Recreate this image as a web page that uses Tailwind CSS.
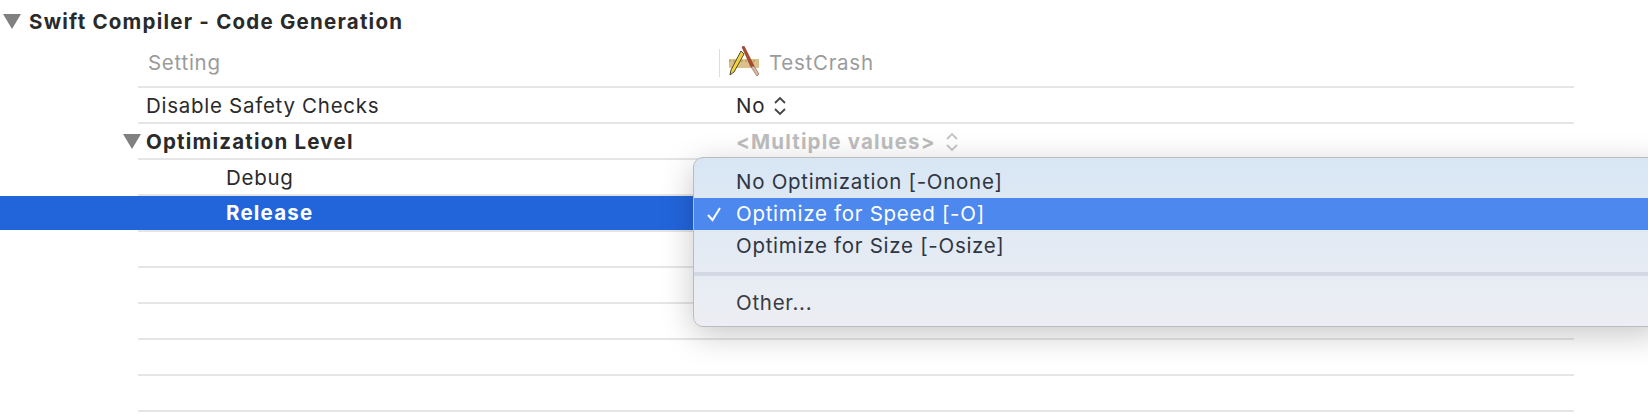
<!DOCTYPE html>
<html><head><meta charset="utf-8"><script src="https://cdn.jsdelivr.net/npm/@tailwindcss/browser@4"></script></head>
<body class="bg-white">
<div class="relative w-[1648px] h-[416px] overflow-hidden bg-white font-['Inter','Liberation_Sans',sans-serif] text-[20.5px] tracking-[0.72px] text-[#2a2a2a]">
  <div class="h-[40px] flex items-center pl-[3px] gap-[8px]">
    <svg class="mt-[3px]" width="18" height="15" viewBox="0 0 18 15"><path d="M0 0H18L9 15Z" fill="#808080"/></svg>
    <span class="font-bold leading-none tracking-[1.22px] pt-[5px]">Swift Compiler - Code Generation</span>
  </div>
  <div class="ml-[138px] w-[1436px]">
    <div class="h-[48px] border-b-2 border-[#e5e5e5] flex items-center text-[#9b9b9b]">
      <span class="w-[581px] pl-[10px]">Setting</span>
      <div class="w-px h-[28px] bg-[#dedede]"></div>
      <svg class="ml-[8px] -mt-[3px]" width="33" height="32" viewBox="0 0 33 32">
        <rect x="1" y="13" width="30" height="9" fill="#dcc08c"/>
        <path d="M2 14V16M6 14V16M10 14V16M14 14V16M18 14V16M22 14V16M26 14V16" stroke="#a98a55" stroke-width="1"/>
        <path d="M13 5L3 24L2 29L6 26L16 8Z" fill="#f3d43c" stroke="#4d4a30" stroke-width="1"/>
        <path d="M14 1L16 0L26 20L23 21Z" fill="#b4492c" stroke="#7a3a28" stroke-width="0.7"/>
        <path d="M23 21L26 20L31 28L29 30Z" fill="#d9b8a4" stroke="#8a6a5a" stroke-width="0.7"/>
      </svg>
      <span class="ml-[8px]">TestCrash</span>
    </div>
    <div class="h-[36px] border-b-2 border-[#e5e5e5] flex items-center">
      <span class="w-[598px] pl-[8px] pt-[3px]">Disable Safety Checks</span>
      <span class="pt-[3px]">No</span>
      <svg class="ml-[8px] mt-[1px]" width="14" height="20" viewBox="0 0 14 20" fill="none" stroke="#444" stroke-width="1.800"><path d="M2 7L7 2L12 7M2 13L7 18L12 13"/></svg>
    </div>
    <div class="h-[36px] border-b-2 border-[#e5e5e5] flex items-center relative">
      <svg class="absolute left-[-15px] top-[10px]" width="18" height="15" viewBox="0 0 18 15"><path d="M0 0H18L9 15Z" fill="#808080"/></svg>
      <span class="w-[598px] pl-[8px] pt-[2px] font-bold tracking-[1.2px]">Optimization Level</span>
      <span class="font-bold pt-[2px] text-[#bdbdbd] tracking-[1.15px]">&lt;Multiple values&gt;</span>
      <svg class="ml-[9px] mt-[1px]" width="14" height="20" viewBox="0 0 14 20" fill="none" stroke="#c4c4c4" stroke-width="1.800"><path d="M2 7L7 2L12 7M2 13L7 18L12 13"/></svg>
    </div>
    <div class="h-[36px] border-b-2 border-[#e5e5e5] flex items-center"><span class="pl-[88px] pt-[3px]">Debug</span></div>
    <div class="h-[36px] border-b-2 border-[#e5e5e5] relative">
      <div class="absolute left-[-138px] w-[1648px] h-[34px] top-0 bg-[#2265db] flex items-center pl-[226px] pt-[1px] font-bold text-white tracking-[1.2px]">Release</div>
    </div>
    <div class="h-[36px] border-b-2 border-[#e5e5e5]"></div>
    <div class="h-[36px] border-b-2 border-[#e5e5e5]"></div>
    <div class="h-[36px] border-b-2 border-[#e5e5e5]"></div>
    <div class="h-[36px] border-b-2 border-[#e5e5e5]"></div>
    <div class="h-[36px] border-b-2 border-[#e5e5e5]"></div>
  </div>
  <div class="absolute left-[693px] top-[157px] w-[970px] h-[170px] rounded-[10px] border border-[#bcbcbc] bg-gradient-to-b from-[#d8e6f4] to-[#edeef3] shadow-[0_8px_32px_rgba(0,0,0,0.22)] pt-[8px] text-[#2e3642]">
    <div class="h-[32px] flex items-center pl-[42px] pt-[1px]">No Optimization [-Onone]</div>
    <div class="h-[32px] flex items-center bg-[#4c88ee] text-white relative pl-[42px]">
      <svg class="absolute left-[12px] top-[8px]" width="17" height="16" viewBox="0 0 17 16" fill="none" stroke="#fff" stroke-width="2"><path d="M2 9L6.500 14L14 2"/></svg>
      Optimize for Speed [-O]
    </div>
    <div class="h-[32px] flex items-center pl-[42px] pt-[1px]">Optimize for Size [-Osize]</div>
    <div class="h-[4px] mt-[10px] bg-[#d3d9e4]"></div>
    <div class="h-[32px] mt-[11px] flex items-center pl-[42px] pt-[1px] text-[#393c42]">Other...</div>
  </div>
</div>
</body></html>
